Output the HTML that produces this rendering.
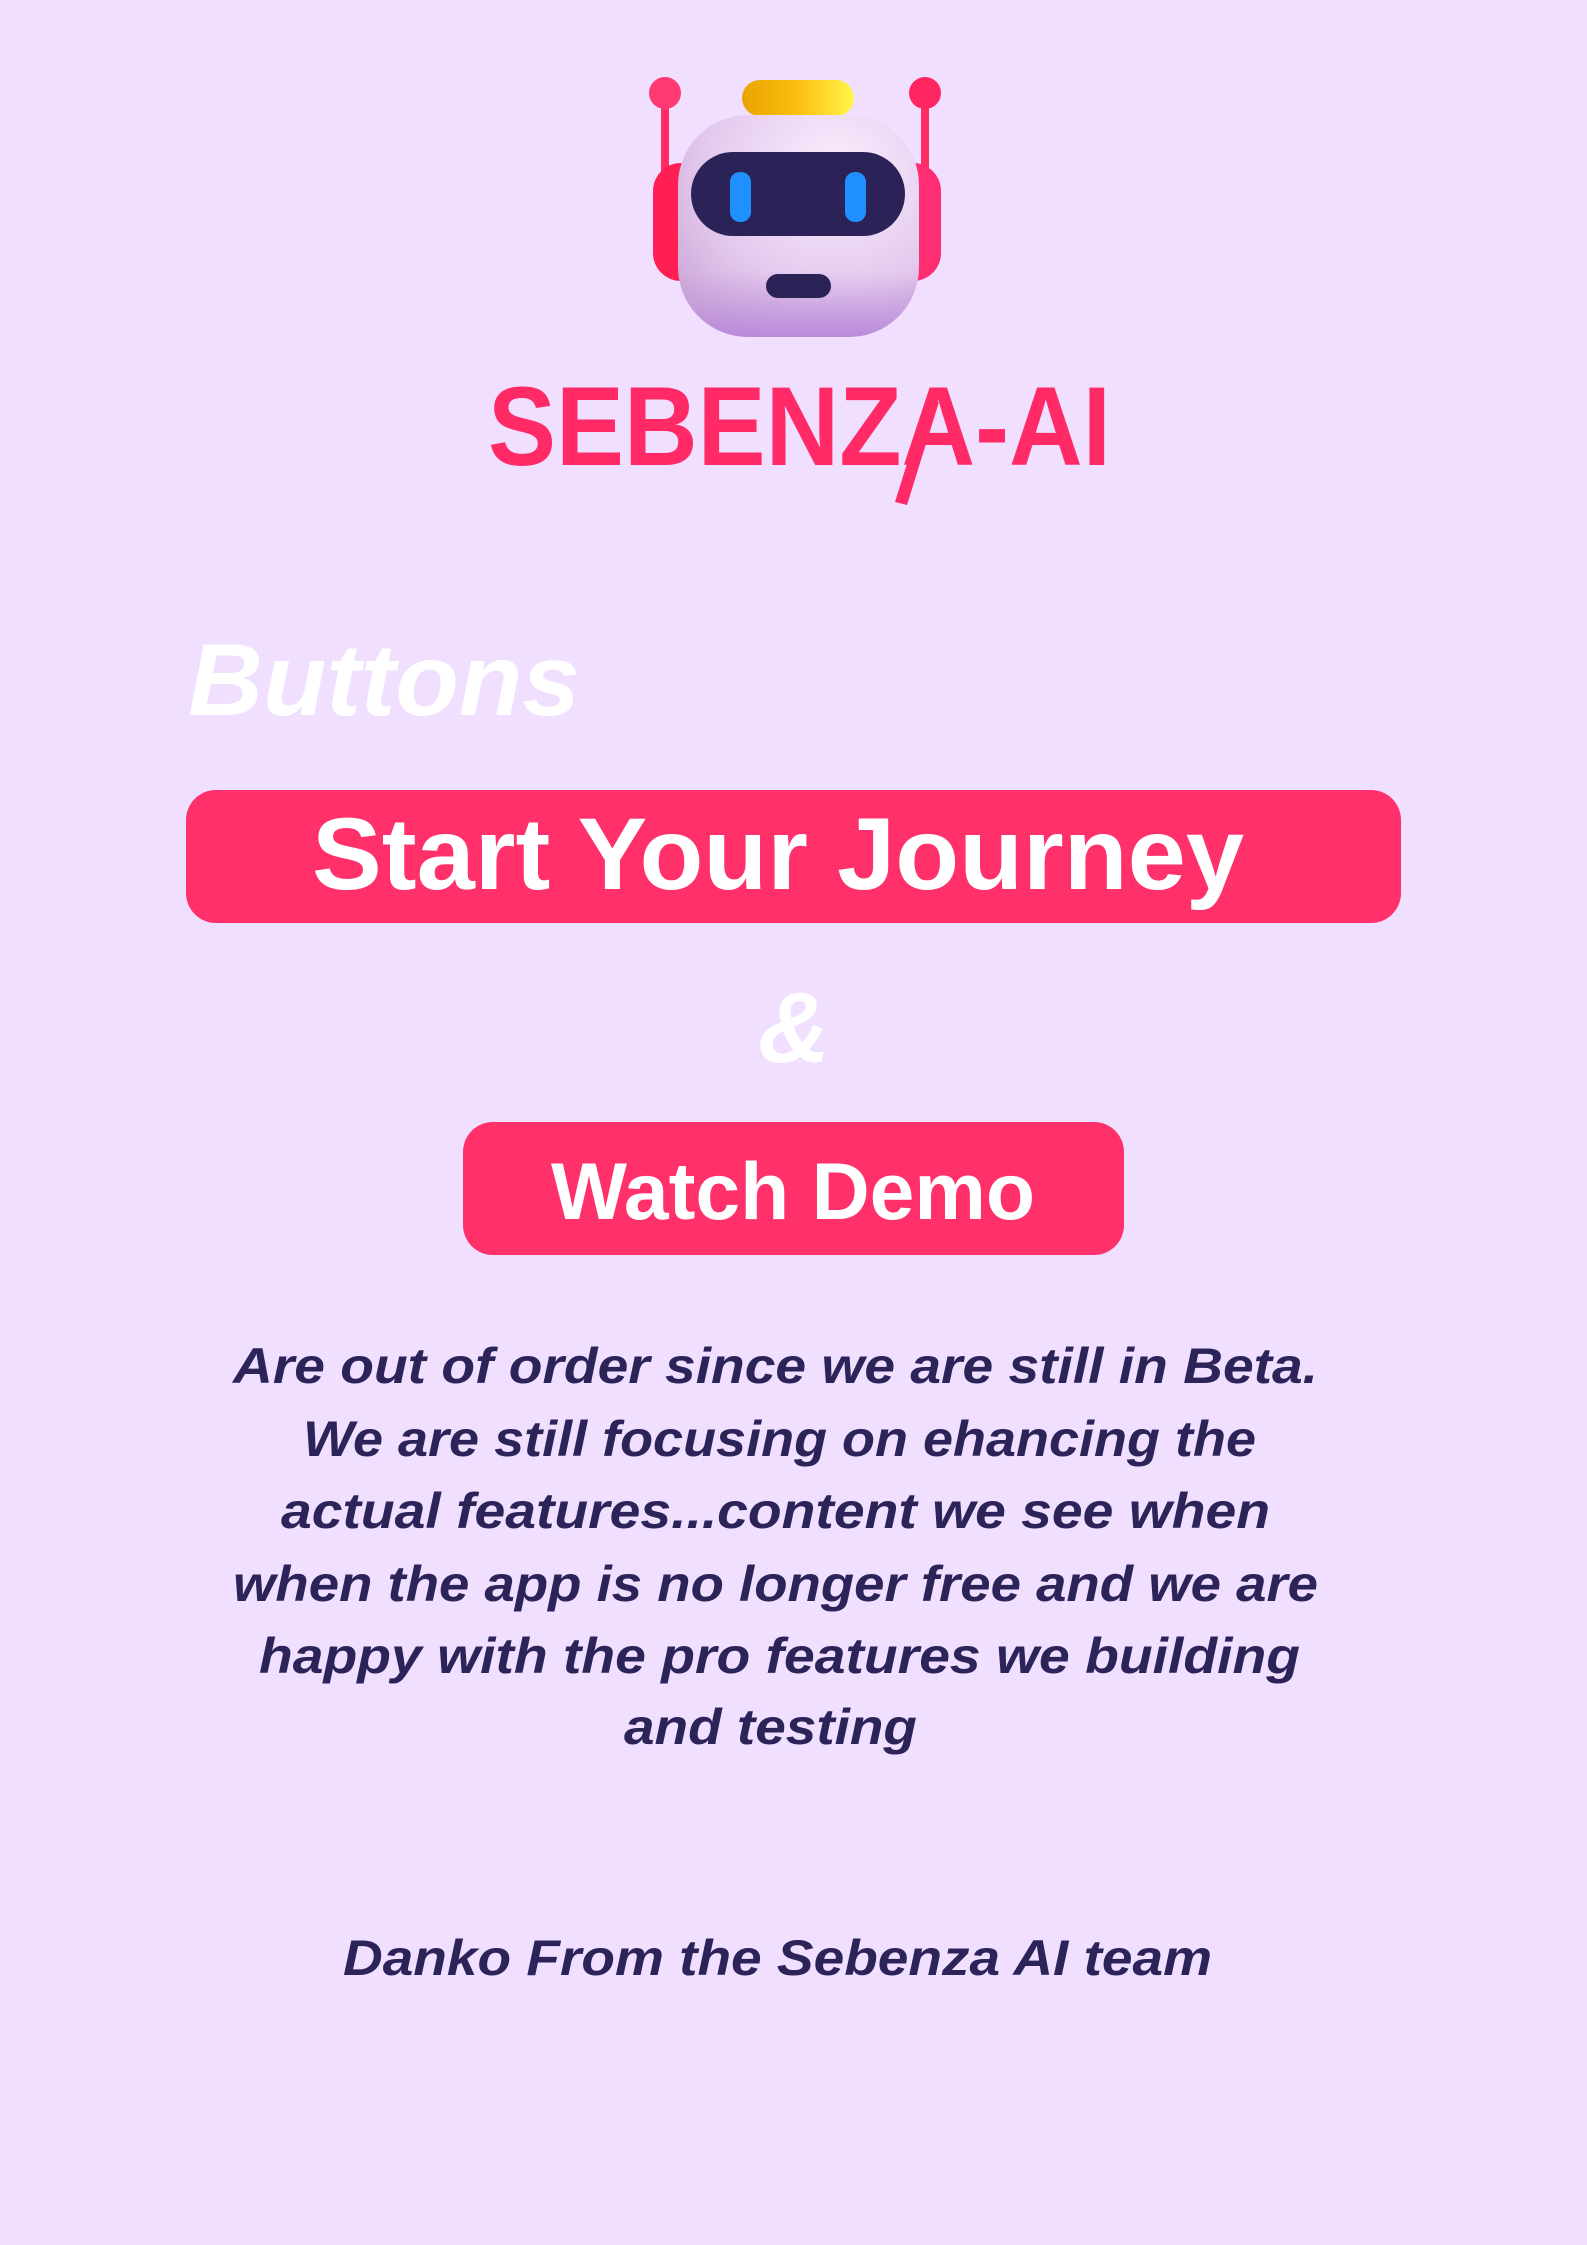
<!DOCTYPE html>
<html><head><meta charset="utf-8"><style>
html,body{margin:0;padding:0;background:#f0dffe;}
svg{display:block;}
</style></head><body>
<svg width="1587" height="2245" viewBox="0 0 1587 2245" xmlns="http://www.w3.org/2000/svg">
<defs>
<linearGradient id="yel" x1="0" x2="1" y1="0" y2="0"><stop offset="0" stop-color="#eaa400"/><stop offset="0.5" stop-color="#fbbf10"/><stop offset="1" stop-color="#fff54a"/></linearGradient>
<radialGradient id="head" cx="0.65" cy="0.25" r="0.9"><stop offset="0" stop-color="#faeefd"/><stop offset="0.6" stop-color="#e3c9ee"/><stop offset="1" stop-color="#c7a1d2"/></radialGradient>
<linearGradient id="chin" x1="0" x2="0" y1="0.7" y2="1"><stop offset="0" stop-color="#c89ee0" stop-opacity="0"/><stop offset="1" stop-color="#b98bdb"/></linearGradient>
</defs>
<rect width="1587" height="2245" fill="#f0dffe"/>
<rect x="661" y="93" width="8" height="90" fill="#ff2d63"/>
<rect x="921" y="93" width="8" height="90" fill="#ff2d63"/>
<circle cx="665" cy="93" r="16" fill="#ff3a72"/>
<circle cx="925" cy="93" r="16" fill="#ff2560"/>
<rect x="653" y="163" width="60" height="118" rx="28" fill="#ff1f55"/>
<rect x="880" y="163" width="61" height="118" rx="28" fill="#ff2d72"/>
<rect x="742" y="80" width="112" height="36" rx="18" fill="url(#yel)"/>
<rect x="678" y="115" width="241" height="222" rx="70" fill="url(#head)"/>
<rect x="678" y="115" width="241" height="222" rx="70" fill="url(#chin)"/>
<rect x="691" y="152" width="214" height="84" rx="42" fill="#2b2358"/>
<rect x="730" y="172" width="21" height="50" rx="10" fill="#1e90ff"/>
<rect x="845" y="172" width="21" height="50" rx="10" fill="#1e90ff"/>
<rect x="766" y="274" width="65" height="24" rx="12" fill="#2b2358"/>
<text x="488" y="465" font-family="Liberation Sans, sans-serif" font-weight="700" font-size="112" fill="#ff2a66" textLength="623" lengthAdjust="spacingAndGlyphs">SEBENZA-AI</text>
<polygon points="927,400 939,402 907,505 895,502" fill="#ff2a66"/>
<text x="188" y="715" font-family="Liberation Sans, sans-serif" font-weight="700" font-style="italic" font-size="102" fill="#ffffff" textLength="392" lengthAdjust="spacingAndGlyphs">Buttons</text>
<rect x="186" y="790" width="1215" height="133" rx="30" fill="#ff306a"/>
<text x="312" y="889" font-family="Liberation Sans, sans-serif" font-weight="700" font-size="102" fill="#ffffff" textLength="932" lengthAdjust="spacingAndGlyphs">Start Your Journey</text>
<text x="794" y="1062" text-anchor="middle" font-family="Liberation Sans, sans-serif" font-weight="700" font-style="italic" font-size="100" fill="#ffffff">&amp;</text>
<rect x="463" y="1122" width="661" height="133" rx="30" fill="#ff306a"/>
<text x="551" y="1219" font-family="Liberation Sans, sans-serif" font-weight="700" font-size="81" fill="#ffffff" textLength="484" lengthAdjust="spacingAndGlyphs">Watch Demo</text>
<g font-family="Liberation Sans, sans-serif" font-weight="700" font-style="italic" font-size="50" fill="#2c2459">
<text x="233" y="1383" textLength="1085" lengthAdjust="spacingAndGlyphs">Are out of order  since we are still in Beta.</text>
<text x="303" y="1456" textLength="953" lengthAdjust="spacingAndGlyphs">We are still focusing on ehancing the</text>
<text x="281" y="1528" textLength="989" lengthAdjust="spacingAndGlyphs">actual features...content we see when</text>
<text x="233" y="1601" textLength="1085" lengthAdjust="spacingAndGlyphs">when the app is no longer free and we are</text>
<text x="259" y="1673" textLength="1041" lengthAdjust="spacingAndGlyphs">happy with the pro features we building</text>
<text x="624" y="1744" textLength="293" lengthAdjust="spacingAndGlyphs">and testing</text>
<text x="343" y="1975" textLength="869" lengthAdjust="spacingAndGlyphs">Danko From the Sebenza AI team</text>
</g>
</svg>
</body></html>
